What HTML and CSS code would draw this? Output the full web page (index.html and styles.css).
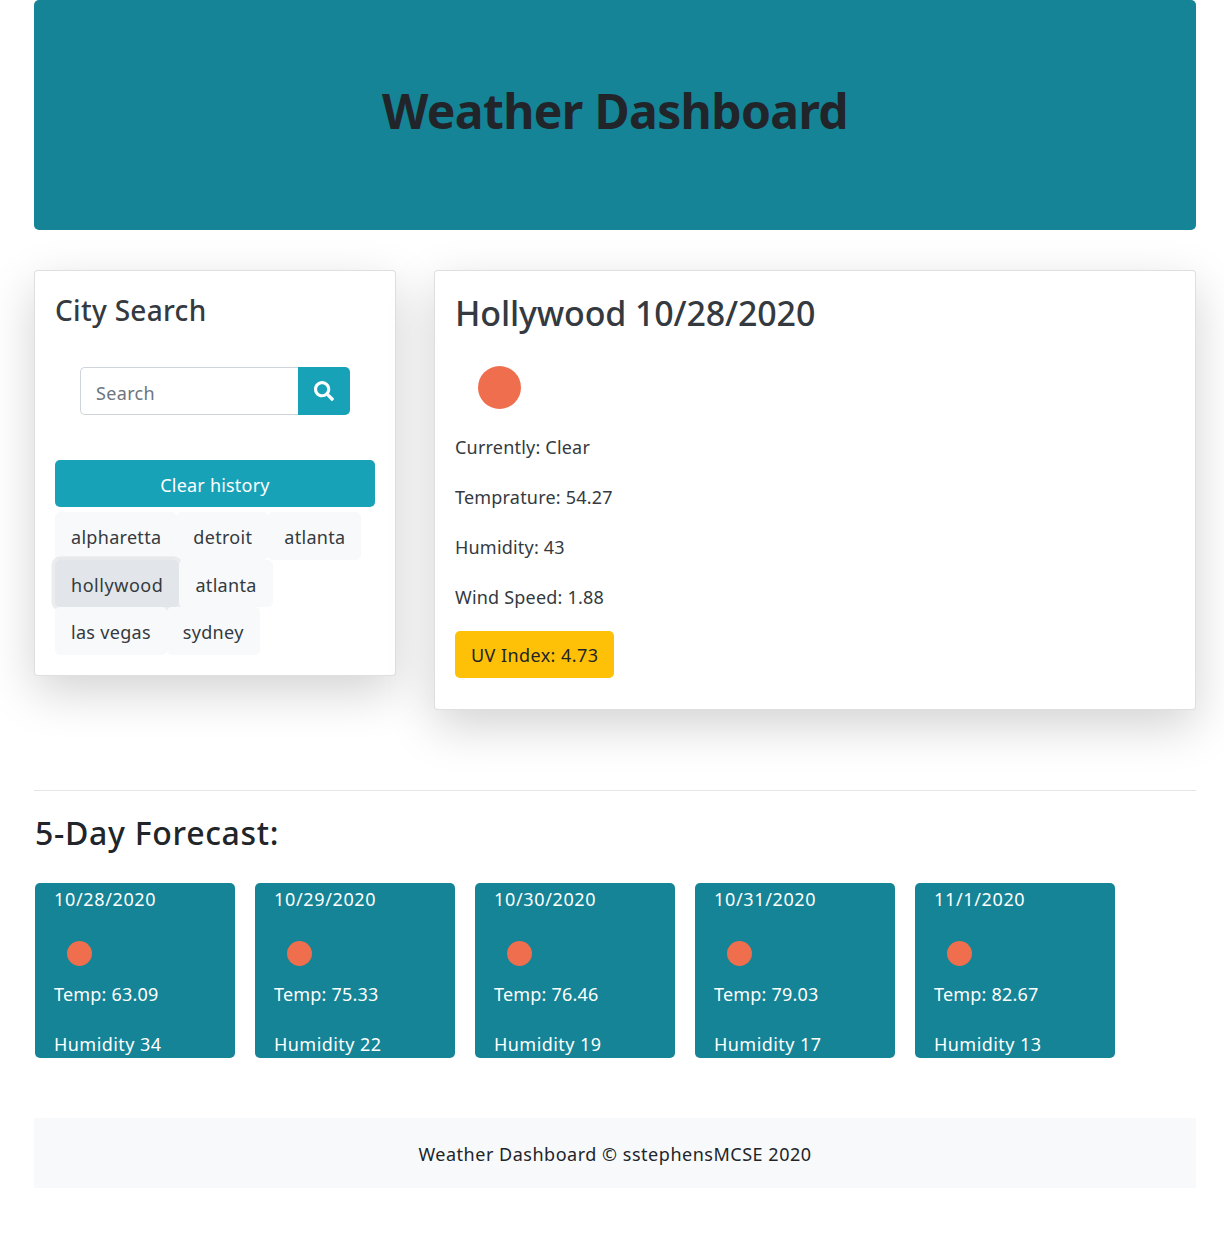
FILE: index.html
```html
<!DOCTYPE html>
<html lang="en">
<head>
<meta charset="utf-8">
<title>Weather Dashboard</title>
<link rel="stylesheet" href="styles.css">
</head>
<body>
<div class="container">
  <header class="jumbotron"><h1>Weather Dashboard</h1></header>
  <main class="top-row">
    <section class="card search-card">
      <h2 class="search-title">City Search</h2>
      <form class="search-form">
        <input class="search-input" type="text" placeholder="Search">
        <button class="search-btn" type="button" aria-label="Search">
          <svg viewBox="0 0 512 512" width="20" height="20"><path fill="#fff" d="M505 442.7L405.3 343c-4.500-4.500-10.600-7-17-7H372c27.600-35.300 44-79.700 44-128C416 93.100 322.900 0 208 0S0 93.100 0 208s93.100 208 208 208c48.300 0 92.700-16.400 128-44v16.300c0 6.400 2.500 12.500 7 17l99.700 99.700c9.400 9.400 24.600 9.400 33.900 0l28.300-28.300c9.400-9.400 9.400-24.600.1-34zM208 336c-70.700 0-128-57.200-128-128 0-70.700 57.200-128 128-128 70.700 0 128 57.200 128 128 0 70.700-57.200 128-128 128z"/></svg>
        </button>
      </form>
      <button class="clear-btn" type="button">Clear history</button>
      <ul class="history">
        <li class="pill">alpharetta</li>
        <li class="pill">detroit</li>
        <li class="pill">atlanta</li>
        <li class="pill active">hollywood</li>
        <li class="pill">atlanta</li>
        <li class="break" aria-hidden="true"></li>
        <li class="pill">las vegas</li>
        <li class="pill">sydney</li>
      </ul>
    </section>
    <section class="card current-card">
      <h2 class="current-title">Hollywood 10/28/2020</h2>
      <div class="sun-wrap"><span class="sun"></span></div>
      <p>Currently: Clear</p>
      <p>Temprature: 54.27</p>
      <p>Humidity: 43</p>
      <p>Wind Speed: 1.88</p>
      <span class="uv">UV Index: 4.73</span>
    </section>
  </main>
  <hr class="rule">
  <h3 class="forecast-title">5-Day Forecast:</h3>
  <div class="forecast">
    <article class="day"><div class="date">10/28/2020</div><span class="sun small"></span><p>Temp: 63.09</p><p class="last">Humidity 34</p></article>
    <article class="day"><div class="date">10/29/2020</div><span class="sun small"></span><p>Temp: 75.33</p><p class="last">Humidity 22</p></article>
    <article class="day"><div class="date">10/30/2020</div><span class="sun small"></span><p>Temp: 76.46</p><p class="last">Humidity 19</p></article>
    <article class="day"><div class="date">10/31/2020</div><span class="sun small"></span><p>Temp: 79.03</p><p class="last">Humidity 17</p></article>
    <article class="day"><div class="date">11/1/2020</div><span class="sun small"></span><p>Temp: 82.67</p><p class="last">Humidity 13</p></article>
  </div>
  <footer class="footer">Weather Dashboard © sstephensMCSE 2020</footer>
</div>
</body>
</html>
```
FILE: styles.css
```css
* { box-sizing: border-box; }
html, body { margin: 0; background: #fff; }
body {
  font-family: "Noto Sans", "Open Sans", sans-serif;
  font-size: 18px;
  line-height: 24px;
  letter-spacing: .2px;
  color: #343a40;
}
.container { width: 1162px; margin-left: 34px; padding-bottom: 54px; }
.jumbotron {
  height: 230px;
  background: #148496;
  border-radius: 5px;
  display: flex;
  align-items: center;
  justify-content: center;
  padding-bottom: 8px;
}
.jumbotron h1 {
  margin: 0;
  font-size: 48px;
  line-height: 58px;
  font-weight: 700;
  letter-spacing: -.62px;
  color: #212529;
}
.top-row { display: flex; gap: 38px; align-items: flex-start; margin-top: 40px; }
.card {
  background: #fff;
  border: 1px solid rgba(0,0,0,.125);
  border-radius: 4px;
  box-shadow: 0 16px 48px rgba(0,0,0,.175);
  padding: 20px;
}
.search-card { width: 362px; height: 406px; }
.current-card { flex: 1; height: 440px; }
.search-title { margin: 0; font-size: 28px; line-height: 38px; font-weight: 500; letter-spacing: .3px; }
.search-form { display: flex; margin: 38px 25px 0 25px; height: 48px; }
.search-input {
  flex: 1;
  min-width: 0;
  border: 1px solid #ced4da;
  border-right: 0;
  border-radius: 5px 0 0 5px;
  padding: 3px 15px 0;
  font: inherit;
  letter-spacing: .35px;
  background: #fff;
  color: #495057;
}
.search-input::placeholder { color: #6c757d; opacity: 1; }
.search-btn {
  width: 52px;
  border: 0;
  padding: 0;
  background: #17a2b8;
  border-radius: 0 5px 5px 0;
  display: flex;
  align-items: center;
  justify-content: center;
}
.clear-btn {
  display: block;
  width: 320px;
  height: 47px;
  margin-top: 45px;
  padding: 2px 0 0;
  border: 0;
  border-radius: 5px;
  background: #17a2b8;
  color: #fff;
  font: inherit;
  letter-spacing: inherit;
}
.history { list-style: none; display: flex; flex-wrap: wrap; margin: 5px 0 0; padding: 0; }
.pill {
  height: 47.500px;
  padding: 13px 16px 0;
  background: #f8f9fa;
  border-radius: 5px;
  letter-spacing: .3px;
}
.pill.active { background: #e2e6ea; box-shadow: 0 0 0 3.500px rgba(216,217,219,.5); letter-spacing: .55px; }
.break { flex-basis: 100%; height: 0; }
.current-title { margin: 0; font-size: 34px; line-height: 44px; font-weight: 500; letter-spacing: -.15px; }
.sun-wrap { height: 43px; margin: 31px 0 0 23px; }
.sun { display: block; width: 43px; height: 43px; border-radius: 50%; background: #ee6e4e; }
.current-card p { margin: 26px 0 0; }
.uv {
  display: inline-block;
  margin-top: 22px;
  padding: 12px 16px 11px;
  background: #ffc107;
  border-radius: 5px;
  color: #212529;
  letter-spacing: .42px;
}
.rule { border: 0; border-top: 1px solid rgba(0,0,0,.1); margin: 80px 0 0; }
.forecast-title { margin: 20px 0 0; padding-left: 1px; font-size: 32px; line-height: 44px; font-weight: 500; letter-spacing: .7px; color: #212529; }
.forecast { display: flex; gap: 20px; margin: 28px 0 0 1px; }
.day {
  width: 200px;
  height: 175px;
  padding-left: 19px;
  background: #148496;
  border-radius: 5px;
  color: #fff;
  overflow: hidden;
}
.date { margin-top: 4px; letter-spacing: .65px; }
.sun.small { width: 25px; height: 25px; margin: 30px 0 0 13px; }
.day p { margin: 16px 0 0; }
.day p.last { margin-top: 26px; letter-spacing: .45px; }
.footer {
  height: 70px;
  margin-top: 60px;
  padding: 2px 0 0;
  background: #f8f9fa;
  display: flex;
  align-items: center;
  justify-content: center;
  color: #212529;
  letter-spacing: .52px;
  text-indent: 0;
}
```
